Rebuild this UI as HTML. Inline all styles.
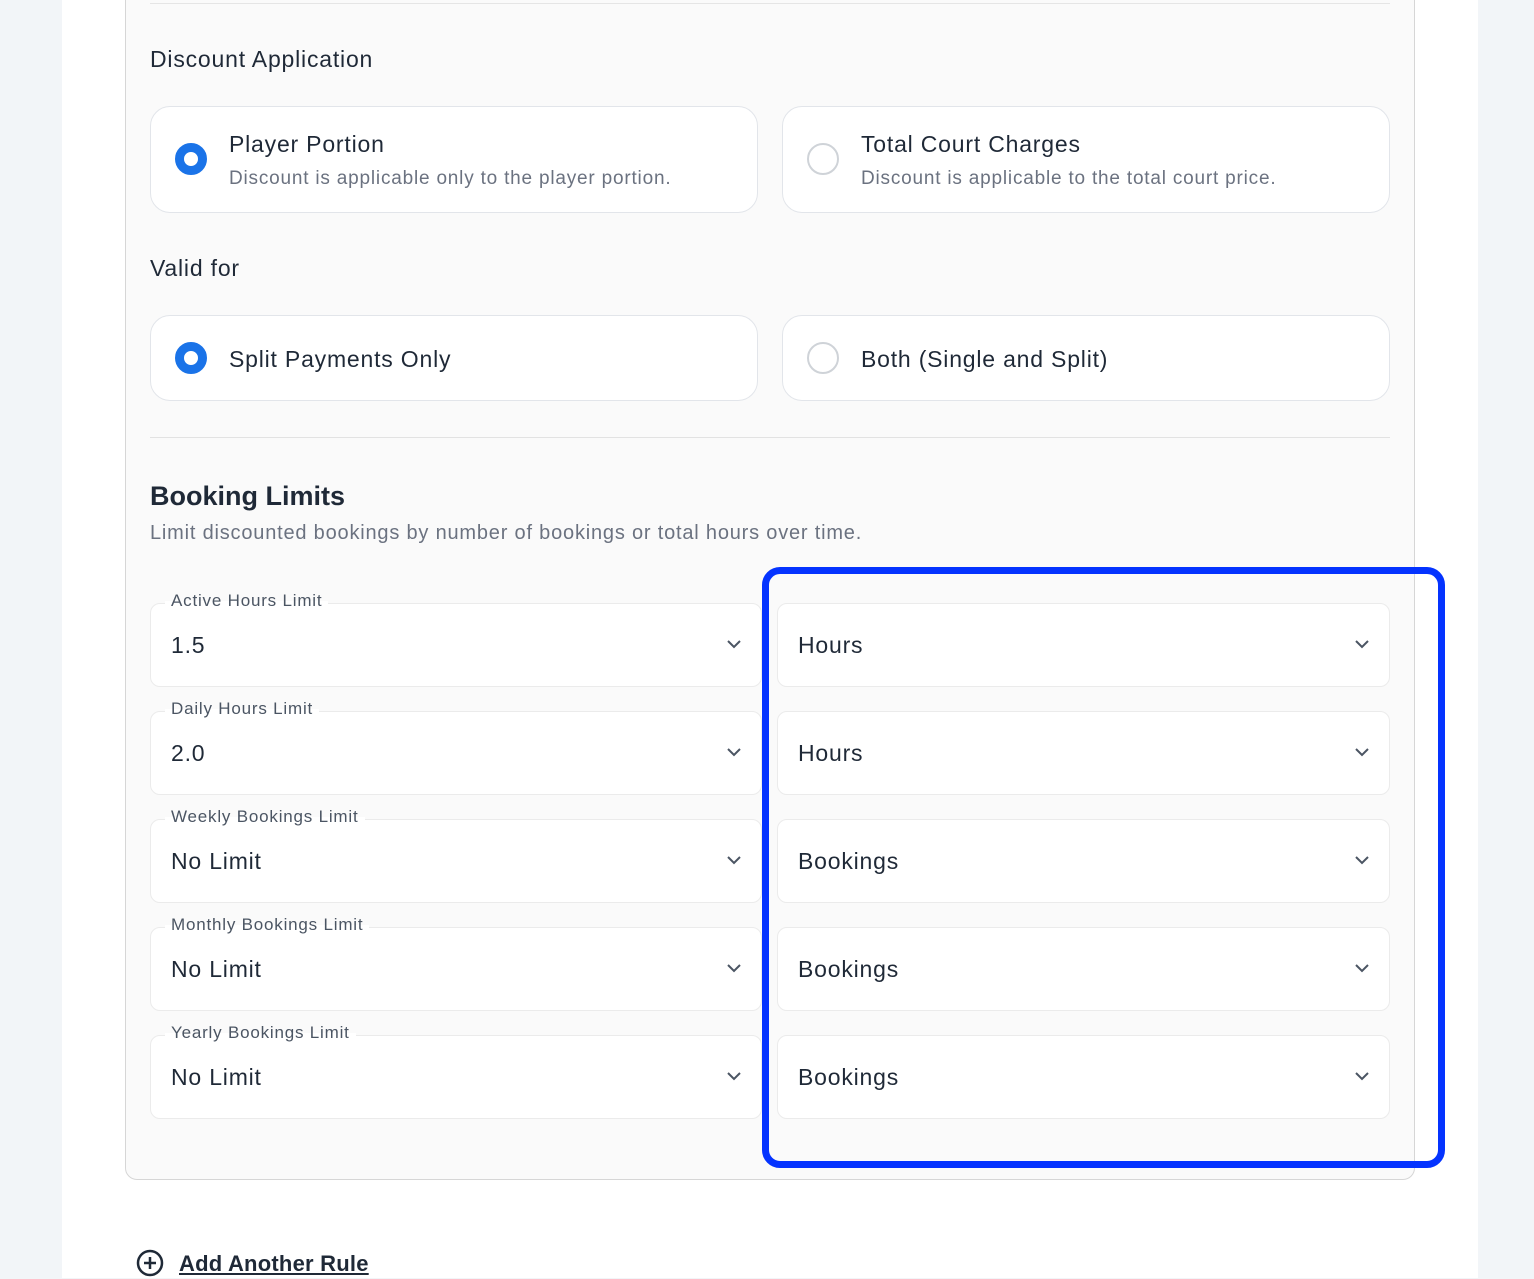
<!DOCTYPE html>
<html><head><style>
*{box-sizing:border-box;margin:0;padding:0}
body{width:1534px;height:1278px;background:#f2f5f8;font-family:"Liberation Sans",sans-serif;color:#1f2937;position:relative;overflow:hidden;letter-spacing:0.05em}
.card{position:absolute;left:62px;top:0;width:1416px;height:1278px;background:#fff}
.panel{position:absolute;left:125px;top:-40px;width:1290px;height:1220px;background:#fafafa;border:1px solid #d6d6d6;border-radius:12px}
.abs{position:absolute}
.h{font-size:23px;color:#1f2937}
.opt{position:absolute;width:608px;background:#fff;border:1px solid #e2e5ea;border-radius:20px}
.radio{position:absolute;left:24px;width:32px;height:32px;border-radius:50%}
.on{border:9px solid #1a73e8;background:#fff}
.off{border:2px solid #cfd3d8;background:#fff}
.t{position:absolute;left:78px;font-size:23px;color:#1f2937}
.s{position:absolute;left:78px;font-size:19px;color:#6b7280}
.field{position:absolute;height:84px;background:#fff;border:1px solid #ebebeb;border-radius:10px}
.lab{position:absolute;top:-13px;left:14px;padding:0 6px;font-size:17px;color:#4b5563;background:linear-gradient(#fafafa 50%,#fff 50%)}
.val{position:absolute;left:20px;top:28px;font-size:23px;color:#1f2937}
.chev{position:absolute;right:18px;top:34px}
</style></head><body>
<div class="card"></div>
<div class="panel"></div>
<div class="abs" style="left:150px;top:3px;width:1240px;height:1px;background:#e5e5e5"></div>
<div class="abs h" style="left:150px;top:46px">Discount Application</div>
<div class="opt" style="left:150px;top:106px;height:107px"><div class="radio on" style="top:36px"></div><div class="t" style="top:24px">Player Portion</div><div class="s" style="top:61px">Discount is applicable only to the player portion.</div></div>
<div class="opt" style="left:782px;top:106px;height:107px"><div class="radio off" style="top:36px"></div><div class="t" style="top:24px">Total Court Charges</div><div class="s" style="top:61px">Discount is applicable to the total court price.</div></div>
<div class="abs h" style="left:150px;top:255px">Valid for</div>
<div class="opt" style="left:150px;top:315px;height:86px"><div class="radio on" style="top:26px"></div><div class="t" style="top:30px">Split Payments Only</div></div>
<div class="opt" style="left:782px;top:315px;height:86px"><div class="radio off" style="top:26px"></div><div class="t" style="top:30px">Both (Single and Split)</div></div>
<div class="abs" style="left:150px;top:437px;width:1240px;height:1px;background:#e2e2e2"></div>
<div class="abs" style="left:150px;top:481px;font-size:27px;font-weight:bold;color:#1f2937;letter-spacing:0">Booking Limits</div>
<div class="abs" style="left:150px;top:522px;font-size:20px;color:#6b7280">Limit discounted bookings by number of bookings or total hours over time.</div>

<div class="field" style="left:150px;top:603px;width:612px"><div class="lab">Active Hours Limit</div><div class="val">1.5</div><svg class="chev" width="18" height="12" viewBox="0 0 18 12"><path d="M3 3l6 6 6-6" fill="none" stroke="#4b5563" stroke-width="2"/></svg></div>
<div class="field" style="left:777px;top:603px;width:613px"><div class="val">Hours</div><svg class="chev" width="18" height="12" viewBox="0 0 18 12"><path d="M3 3l6 6 6-6" fill="none" stroke="#4b5563" stroke-width="2"/></svg></div>

<div class="field" style="left:150px;top:711px;width:612px"><div class="lab">Daily Hours Limit</div><div class="val">2.0</div><svg class="chev" width="18" height="12" viewBox="0 0 18 12"><path d="M3 3l6 6 6-6" fill="none" stroke="#4b5563" stroke-width="2"/></svg></div>
<div class="field" style="left:777px;top:711px;width:613px"><div class="val">Hours</div><svg class="chev" width="18" height="12" viewBox="0 0 18 12"><path d="M3 3l6 6 6-6" fill="none" stroke="#4b5563" stroke-width="2"/></svg></div>

<div class="field" style="left:150px;top:819px;width:612px"><div class="lab">Weekly Bookings Limit</div><div class="val">No Limit</div><svg class="chev" width="18" height="12" viewBox="0 0 18 12"><path d="M3 3l6 6 6-6" fill="none" stroke="#4b5563" stroke-width="2"/></svg></div>
<div class="field" style="left:777px;top:819px;width:613px"><div class="val">Bookings</div><svg class="chev" width="18" height="12" viewBox="0 0 18 12"><path d="M3 3l6 6 6-6" fill="none" stroke="#4b5563" stroke-width="2"/></svg></div>

<div class="field" style="left:150px;top:927px;width:612px"><div class="lab">Monthly Bookings Limit</div><div class="val">No Limit</div><svg class="chev" width="18" height="12" viewBox="0 0 18 12"><path d="M3 3l6 6 6-6" fill="none" stroke="#4b5563" stroke-width="2"/></svg></div>
<div class="field" style="left:777px;top:927px;width:613px"><div class="val">Bookings</div><svg class="chev" width="18" height="12" viewBox="0 0 18 12"><path d="M3 3l6 6 6-6" fill="none" stroke="#4b5563" stroke-width="2"/></svg></div>

<div class="field" style="left:150px;top:1035px;width:612px"><div class="lab">Yearly Bookings Limit</div><div class="val">No Limit</div><svg class="chev" width="18" height="12" viewBox="0 0 18 12"><path d="M3 3l6 6 6-6" fill="none" stroke="#4b5563" stroke-width="2"/></svg></div>
<div class="field" style="left:777px;top:1035px;width:613px"><div class="val">Bookings</div><svg class="chev" width="18" height="12" viewBox="0 0 18 12"><path d="M3 3l6 6 6-6" fill="none" stroke="#4b5563" stroke-width="2"/></svg></div>

<div class="abs" style="left:762px;top:567px;width:683px;height:601px;border:7px solid #0433ff;border-radius:18px"></div>

<svg class="abs" style="left:136px;top:1249px" width="30" height="30" viewBox="0 0 30 30"><circle cx="14" cy="14" r="12" fill="none" stroke="#1f2937" stroke-width="2.5"/><path d="M14 8v12M8 14h12" stroke="#1f2937" stroke-width="2.5"/></svg>
<div class="abs" style="left:179px;top:1251px;font-size:22px;font-weight:bold;color:#1f2937;text-decoration:underline;letter-spacing:0.01em">Add Another Rule</div>
</body></html>
